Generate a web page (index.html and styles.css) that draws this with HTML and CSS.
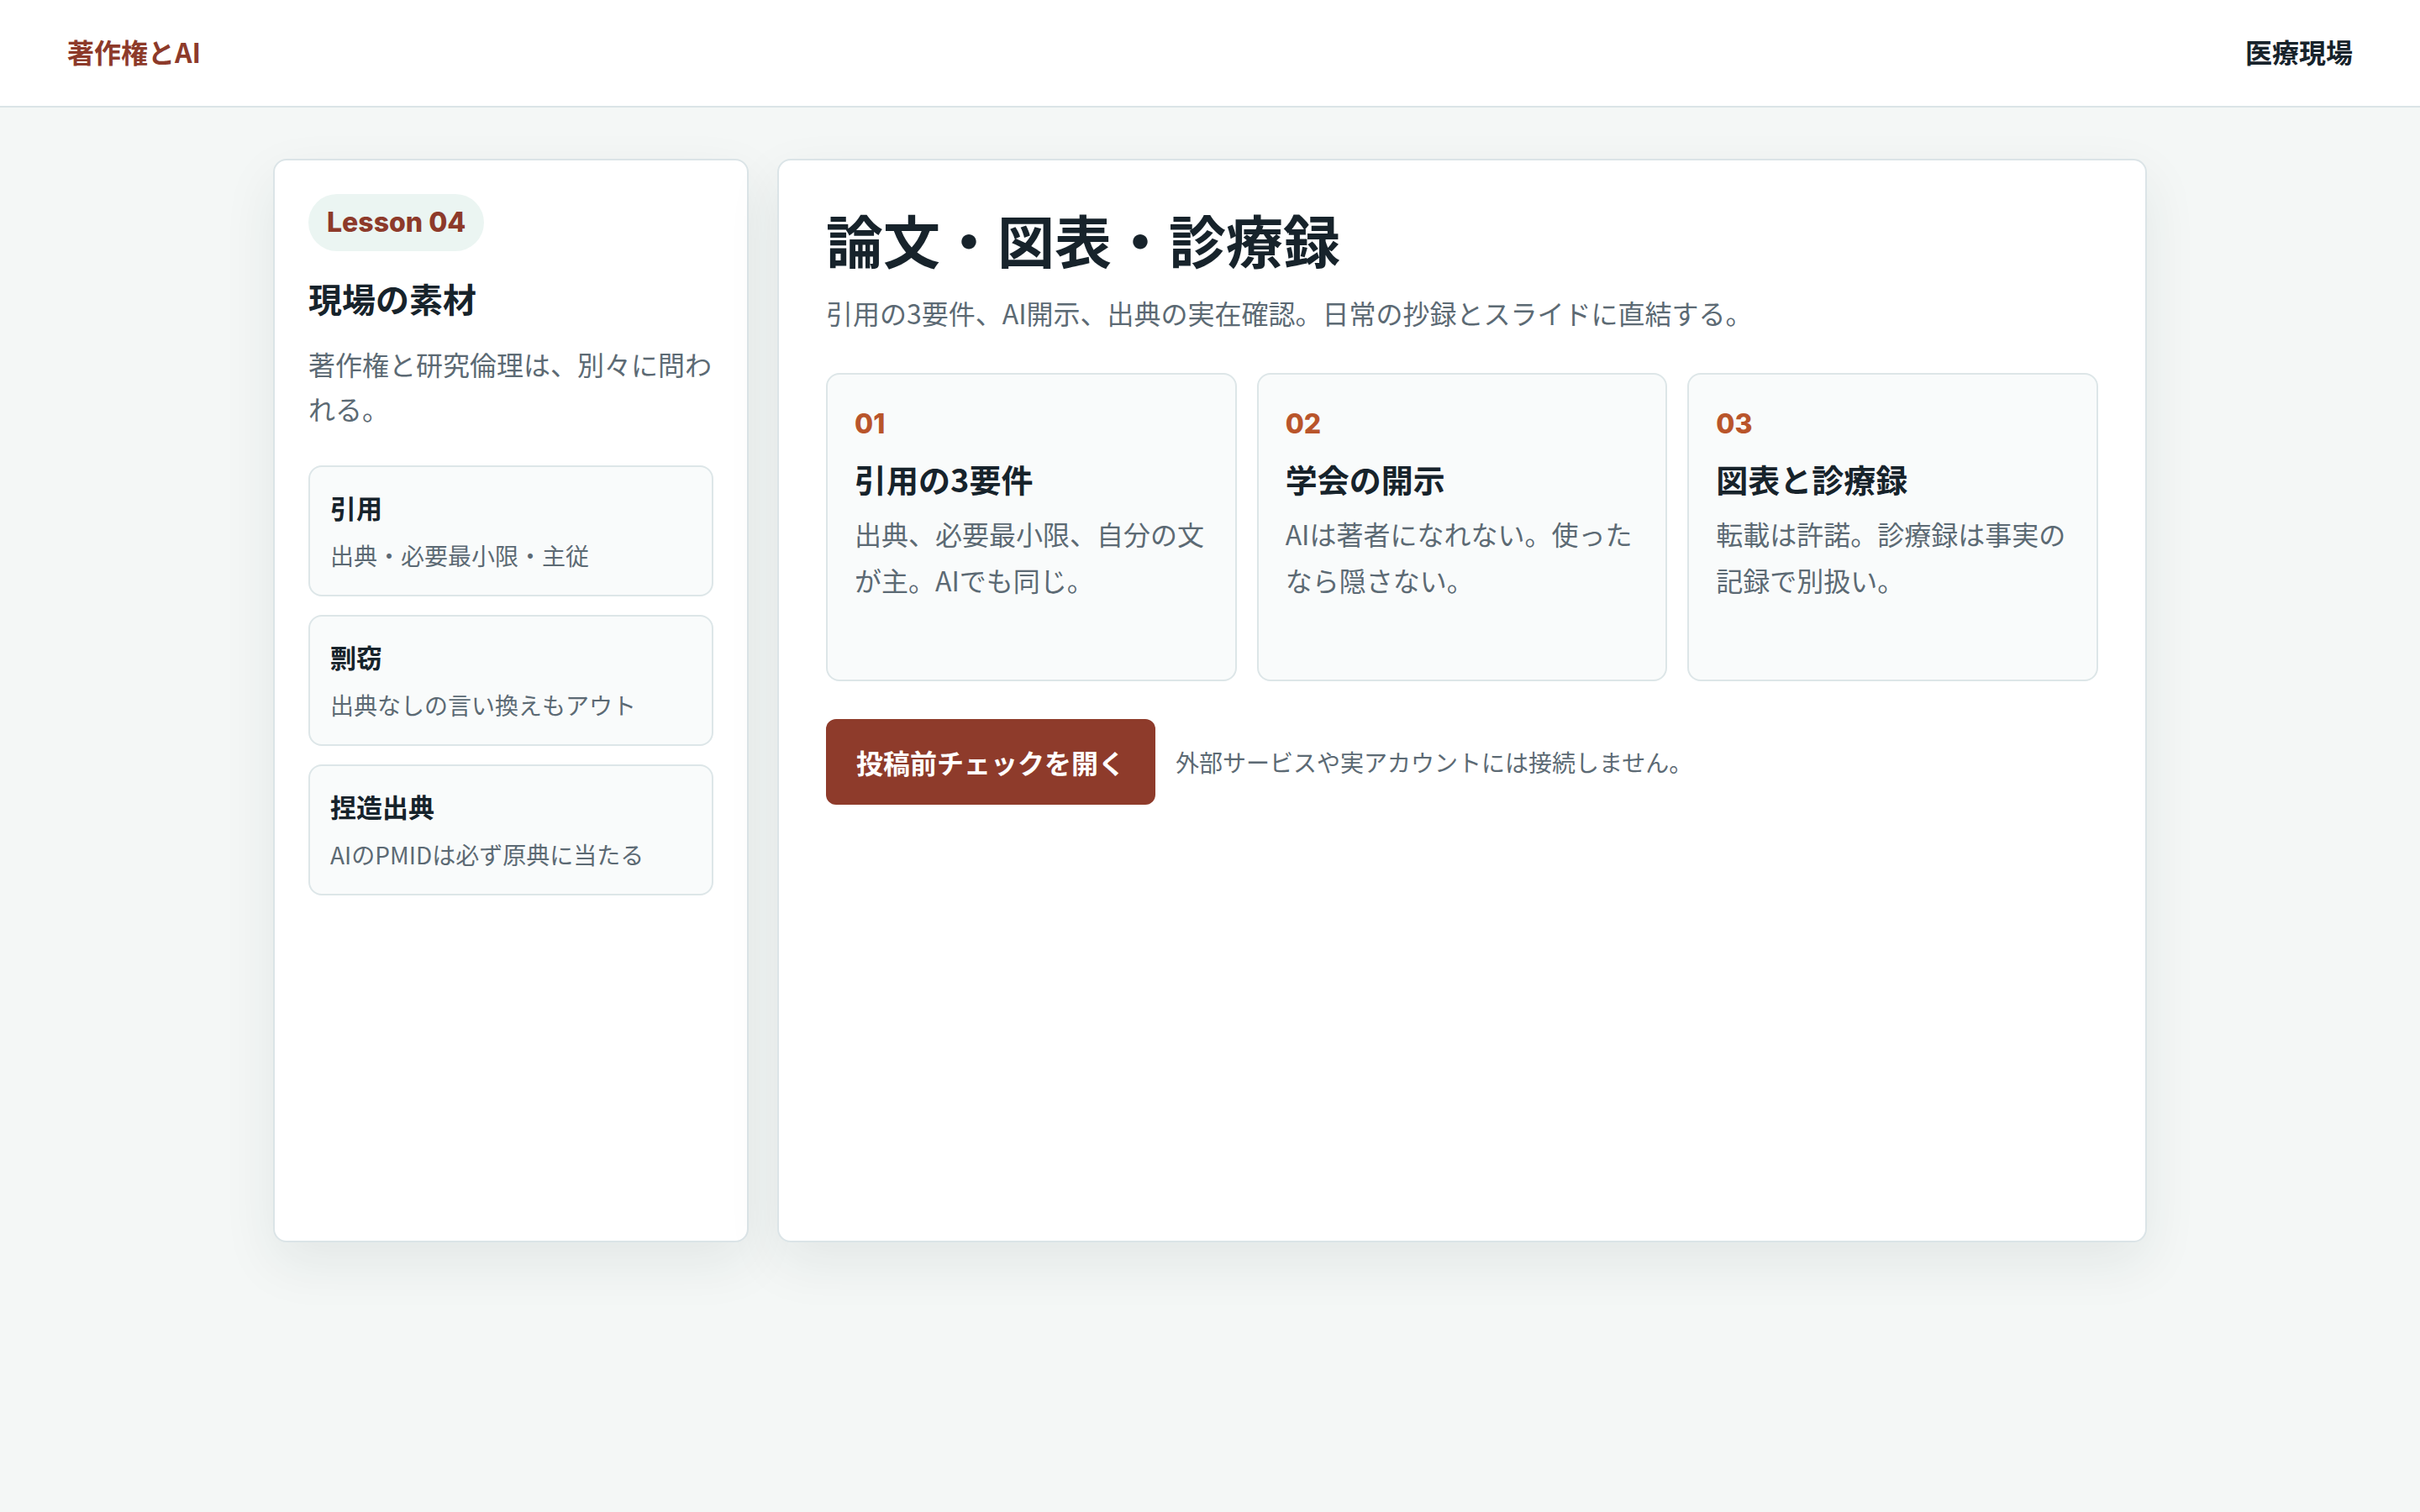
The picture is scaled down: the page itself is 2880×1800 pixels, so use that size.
FILE: index.html
```html
<!DOCTYPE html>
<html lang="ja">
<head>
<meta charset="utf-8">
<title>著作権とAI — 論文・図表・診療録</title>
<link rel="stylesheet" href="styles.css">
</head>
<body>
<header class="topbar">
  <div class="brand">著作権とAI</div>
  <nav class="topnav">医療現場</nav>
</header>
<main class="layout">
  <aside class="panel side">
    <span class="pill">Lesson 04</span>
    <h2 class="side-title">現場の素材</h2>
    <p class="side-lead">著作権と研究倫理は、別々に問われる。</p>
    <ul class="topics">
      <li class="topic"><strong>引用</strong><span>出典・必要最小限・主従</span></li>
      <li class="topic"><strong>剽窃</strong><span>出典なしの言い換えもアウト</span></li>
      <li class="topic"><strong>捏造出典</strong><span>AIのPMIDは必ず原典に当たる</span></li>
    </ul>
  </aside>
  <section class="panel main">
    <h1 class="title">論文・図表・診療録</h1>
    <p class="lead">引用の3要件、AI開示、出典の実在確認。日常の抄録とスライドに直結する。</p>
    <div class="steps">
      <article class="step">
        <div class="num">01</div>
        <h3 class="step-title">引用の3要件</h3>
        <p class="step-text">出典、必要最小限、自分の文が主。AIでも同じ。</p>
      </article>
      <article class="step">
        <div class="num">02</div>
        <h3 class="step-title">学会の開示</h3>
        <p class="step-text">AIは著者になれない。使ったなら隠さない。</p>
      </article>
      <article class="step">
        <div class="num">03</div>
        <h3 class="step-title">図表と診療録</h3>
        <p class="step-text">転載は許諾。診療録は事実の記録で別扱い。</p>
      </article>
    </div>
    <div class="actions">
      <button class="cta" type="button">投稿前チェックを開く</button>
      <span class="note">外部サービスや実アカウントには接続しません。</span>
    </div>
  </section>
</main>
</body>
</html>
```

FILE: styles.css
```css
* {
  box-sizing: border-box;
}

html, body {
  margin: 0;
  padding: 0;
}

body {
  background: #f4f7f6;
  color: #17232b;
  font-family: "Noto Sans CJK JP", "Noto Sans", sans-serif;
  min-height: 1800px;
}

.topbar {
  height: 128px;
  padding: 0 80px 4px;
  background: #ffffff;
  border-bottom: 2px solid #dbe4e7;
  display: flex;
  align-items: center;
  justify-content: space-between;
}

.brand {
  font-size: 32px;
  font-weight: 700;
  color: #8d3a2a;
  line-height: 44px;
}

.topnav {
  font-size: 32px;
  font-weight: 700;
  color: #17232b;
  line-height: 44px;
}

.layout {
  width: 2230px;
  margin: 61px auto 0;
  display: grid;
  grid-template-columns: 566px 1fr;
  gap: 34px;
}

.panel {
  background: #ffffff;
  border: 2px solid #dbe4e7;
  border-radius: 16px;
  box-shadow: 0 24px 64px rgba(22, 48, 48, 0.08);
  min-height: 1290px;
}

.side {
  padding: 40px;
}

.pill {
  display: inline-block;
  padding: 14px 22px;
  line-height: 40px;
  font-family: Inter, "Noto Sans", sans-serif;
  font-weight: 800;
  font-size: 32px;
  color: #8d3a2a;
  background: #ebf5f2;
  border-radius: 999px;
}

.side-title {
  margin: 28px 0 0;
  font-size: 40px;
  line-height: 56px;
  font-weight: 700;
  color: #17232b;
}

.side-lead {
  margin: 24px 0 0;
  font-size: 32px;
  line-height: 53px;
  color: #5c6a74;
}

.topics {
  list-style: none;
  margin: 41px 0 0;
  padding: 0;
  display: flex;
  flex-direction: column;
  gap: 22px;
}

.topic {
  background: #f9fbfb;
  border: 2px solid #dde6e8;
  border-radius: 16px;
  padding: 25px 24px;
  display: flex;
  flex-direction: column;
}

.topic strong {
  font-size: 31px;
  line-height: 46px;
  font-weight: 700;
  color: #17232b;
}

.topic span {
  margin-top: 12px;
  font-size: 28px;
  line-height: 44px;
  color: #5c6a74;
}

.main {
  padding: 56px;
}

.title {
  margin: 0;
  font-size: 68px;
  line-height: 75px;
  font-weight: 700;
  color: #17232b;
}

.lead {
  margin: 23px 0 0;
  font-size: 32px;
  line-height: 54px;
  color: #5c6a74;
}

.steps {
  margin-top: 45px;
  display: grid;
  grid-template-columns: repeat(3, 1fr);
  gap: 24px;
}

.step {
  min-height: 367px;
  padding: 33px 32px 32px;
  background: #f9fbfb;
  border: 2px solid #dde6e8;
  border-radius: 16px;
}

.num {
  font-family: Inter, "Noto Sans", sans-serif;
  font-weight: 800;
  font-size: 32px;
  line-height: 52px;
  color: #b9552b;
}

.step-title {
  margin: 12px 0 0;
  font-size: 38px;
  line-height: 53px;
  font-weight: 700;
  color: #17232b;
}

.step-text {
  margin: 12px 0 0;
  font-size: 32px;
  line-height: 55px;
  color: #5c6a74;
}

.actions {
  margin-top: 45px;
  display: flex;
  align-items: center;
  gap: 24px;
}

.cta {
  background: #8e3b2b;
  color: #ffffff;
  border: 0;
  border-radius: 12px;
  padding: 27px 36px;
  font-family: "Noto Sans CJK JP", "Noto Sans", sans-serif;
  font-size: 32px;
  line-height: 48px;
  font-weight: 700;
  cursor: pointer;
}

.note {
  font-size: 28px;
  line-height: 44px;
  color: #5c6a74;
}
```
